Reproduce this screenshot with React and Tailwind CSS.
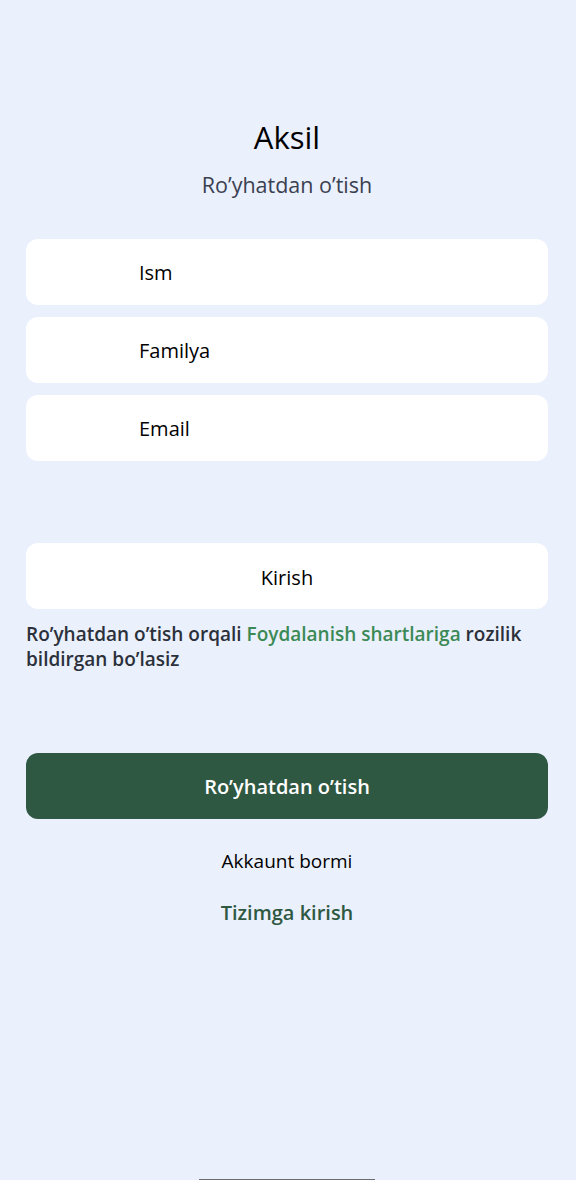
import React from "react";

const fields = ["Ism", "Familya", "Email"];

const App = () => {
  return (
    <div
      className="min-h-[1180px] w-full bg-[#eaf0fc] flex flex-col relative overflow-hidden"
      style={{ fontFamily: '"Open Sans", "Noto Sans", sans-serif' }}
    >
      <div className="pl-[26px] pr-[28px] pt-[116px] flex flex-col">
        <h1 className="text-center text-[31px] leading-[42px] text-black">Aksil</h1>
        <p className="mt-[12px] text-center text-[21.5px] leading-[29px] text-[#3b4050]">
          Ro’yhatdan o’tish
        </p>

        <div className="mt-[40px] flex flex-col gap-[12px]">
          {fields.map((f) => (
            <div
              key={f}
              className="h-[66px] rounded-[12px] bg-white flex items-center pl-[113px] pt-[2px] text-[20px] text-black"
            >
              {f}
            </div>
          ))}
        </div>

        <button className="mt-[82px] h-[66px] rounded-[12px] bg-white flex items-center justify-center pt-[3px] text-[20px] text-black">
          Kirish
        </button>

        <p className="mt-[13px] text-[19px] leading-[25px] font-semibold text-[#2b303b]">
          Ro’yhatdan o’tish orqali{" "}
          <span className="text-[#3b8a56]">Foydalanish shartlariga</span> rozilik
          bildirgan bo’lasiz
        </p>

        <button className="mt-[81px] h-[66px] rounded-[12px] bg-[#2f5842] flex items-center justify-center pt-[2px] text-[20px] font-semibold text-white">
          Ro’yhatdan o’tish
        </button>

        <p className="mt-[29px] text-center text-[19px] leading-[26px] text-black">
          Akkaunt bormi
        </p>
        <p className="mt-[25px] text-center text-[20px] leading-[28px] font-semibold text-[#2f5842]">
          Tizimga kirish
        </p>
      </div>

      <div className="absolute bottom-0 left-[199px] w-[176px] h-[1px] bg-[#6b6b73]" />
    </div>
  );
};

export default App;
